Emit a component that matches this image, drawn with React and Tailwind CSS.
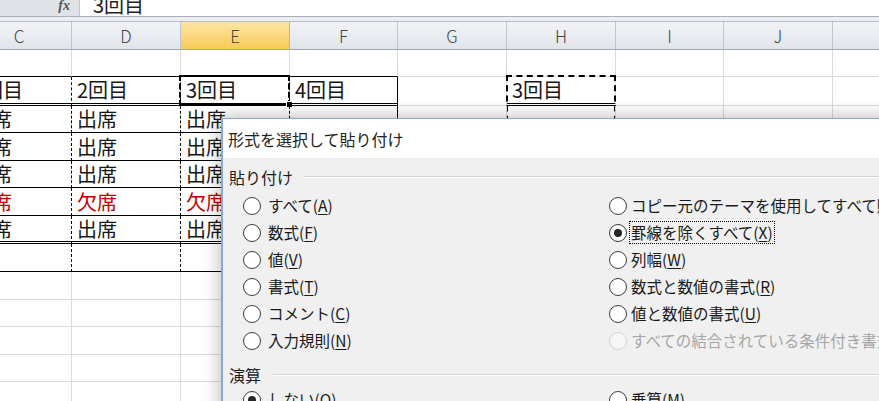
import React from 'react';

const columns = [
  { id: 'C', w: 'w-[105px]' },
  { id: 'D', w: 'w-[109px]' },
  { id: 'E', w: 'w-[109px]' },
  { id: 'F', w: 'w-[108px]' },
  { id: 'G', w: 'w-[109px]' },
  { id: 'H', w: 'w-[109px]' },
  { id: 'I', w: 'w-[108px]' },
  { id: 'J', w: 'w-[109px]' },
  { id: 'K', w: 'w-[100px]' },
];

const rowHeights = [
  'h-[27px]', 'h-[29px]', 'h-[27px]', 'h-[28px]', 'h-[27px]', 'h-[28px]', 'h-[28px]',
  'h-[28px]', 'h-[28px]', 'h-[27px]', 'h-[28px]', 'h-[27px]', 'h-[28px]',
];

// attendance table, sheet rows 2..8
const table = {
  C: ['1回目', '出席', '出席', '出席', '欠席', '出席', ''],
  D: ['2回目', '出席', '出席', '出席', '欠席', '出席', ''],
  E: ['3回目', '出席', '出席', '出席', '欠席', '出席', ''],
  F: ['4回目', '', '', '', '', '', ''],
};

const tableCols = ['C', 'D', 'E', 'F'];

const cellBorders = (r, c) => {
  const inTable = r >= 1 && r <= 7 && tableCols.includes(c);
  let right = 'border-r border-r-[#dadada]';
  if (inTable && c !== 'F') right = 'border-r border-r-black [border-right-style:dashed]!';
  if (inTable && c === 'F') right = 'border-r border-r-black';

  let bottom = 'border-b border-b-[#dadada]';
  if (r === 0 && tableCols.includes(c)) bottom = 'border-b border-b-black';
  if (inTable) {
    bottom = r === 1 || r === 6
      ? 'border-b-[3px] border-b-black [border-bottom-style:double]!'
      : 'border-b border-b-black';
  }
  if (r === 1 && c === 'H') bottom = 'border-b-[3px] border-b-black [border-bottom-style:double]!';
  return `${right} ${bottom}`;
};

const cellText = (r, c) => {
  if (r >= 1 && r <= 7 && table[c]) return table[c][r - 1];
  if (r === 1 && c === 'H') return '3回目';
  return '';
};

const Radio = ({ checked, disabled }) => (
  <span
    className={`w-[18px] h-[18px] rounded-full border flex items-center justify-center shrink-0 ${
      disabled ? 'border-[#d2d2d2] bg-[#f6f6f6]' : 'border-[#3c3c3c] bg-white'
    }`}
  >
    {checked && <span className="w-[8px] h-[8px] rounded-full bg-[#262626]" />}
  </span>
);

const Label = ({ text, k }) => (
  <>
    {text}(<span className="underline underline-offset-2">{k}</span>)
  </>
);

const leftOptions = [
  { text: 'すべて', k: 'A' },
  { text: '数式', k: 'F' },
  { text: '値', k: 'V' },
  { text: '書式', k: 'T' },
  { text: 'コメント', k: 'C' },
  { text: '入力規則', k: 'N' },
];

const rightOptions = [
  { text: 'コピー元のテーマを使用してすべて貼り付け', k: 'H' },
  { text: '罫線を除くすべて', k: 'X', checked: true },
  { text: '列幅', k: 'W' },
  { text: '数式と数値の書式', k: 'R' },
  { text: '値と数値の書式', k: 'U' },
  { text: 'すべての結合されている条件付き書式', k: 'G', disabled: true },
];

const GroupLabel = ({ children, line }) => (
  <div className="flex items-center h-[20px] pl-[6px]">
    <span className="text-[16px] leading-none text-[#1e1e1e]">{children}</span>
    <div className={`flex-1 border-t border-t-[#d6d6d6] border-b border-b-white ${line}`} />
  </div>
);

const PasteSpecialDialog = () => (
  <div className="absolute left-[221px] top-[118px] w-[720px] h-[320px] z-10 border-l-2 border-t border-[#86aad3] shadow-[0_0_18px_rgba(0,0,0,0.3)] flex flex-col">
    <div className="h-[40px] bg-white flex items-center pl-[5px] pr-[47px] border-b border-b-[#ececec]">
      <span className="text-[16px] text-[#222]">形式を選択して貼り付け</span>
      <span className="ml-auto text-[17px] font-bold text-[#333] font-['Liberation_Sans',sans-serif]">?</span>
    </div>
    <div className="flex-1 bg-[#f0f0f0] pt-[8px]">
      <GroupLabel line="ml-[11px]">貼り付け</GroupLabel>
      <div className="grid grid-cols-[366px_1fr] pl-[20px] mt-[5px] text-[15.5px] text-[#1a1a1a]">
        <div className="flex flex-col">
          {leftOptions.map((o) => (
            <div key={o.k} className="h-[27px] flex items-center gap-[7px] whitespace-nowrap">
              <Radio />
              <span className="leading-none"><Label text={o.text} k={o.k} /></span>
            </div>
          ))}
        </div>
        <div className="flex flex-col">
          {rightOptions.map((o) => (
            <div key={o.k} className="h-[27px] flex items-center gap-[2px] whitespace-nowrap">
              <Radio checked={o.checked} disabled={o.disabled} />
              <span
                className={`leading-none px-[1px] py-[3px] border border-dotted ${
                  o.checked ? 'border-black' : 'border-transparent'
                } ${o.disabled ? 'text-[#a6a6a6]' : ''}`}
              >
                <Label text={o.text} k={o.k} />
              </span>
            </div>
          ))}
        </div>
      </div>
      <div className="mt-[11px]">
        <GroupLabel line="ml-[12px]">演算</GroupLabel>
      </div>
      <div className="grid grid-cols-[366px_1fr] pl-[20px] mt-[1px] text-[15.5px] text-[#1a1a1a]">
        <div className="h-[27px] flex items-center gap-[7px] whitespace-nowrap">
          <Radio checked />
          <span className="leading-none"><Label text="しない" k="O" /></span>
        </div>
        <div className="h-[27px] flex items-center gap-[2px] whitespace-nowrap">
          <Radio />
          <span className="leading-none px-[1px] border border-transparent"><Label text="乗算" k="M" /></span>
        </div>
      </div>
    </div>
  </div>
);

export default function App() {
  return (
    <div className="relative w-[879px] h-[401px] overflow-hidden bg-white font-['Noto_Sans_CJK_JP',sans-serif]">
      {/* formula bar */}
      <div className="flex h-[17px] border-b border-b-[#a9b0ba]">
        <div className="w-[80px] bg-[#dfe3e8] border-r border-r-[#c3c9d1] flex justify-end items-start pr-[9px]">
          <span className="text-[14px] leading-[12px] italic font-bold text-[#555] font-['Liberation_Serif',serif]">fx</span>
        </div>
        <div className="flex-1 overflow-hidden pl-[13px]">
          <div className="text-[20px] leading-[20px] -mt-[5px] text-[#222]">3回目</div>
        </div>
      </div>
      <div className="h-[4px] bg-[#eceef1]" />

      <div className="-ml-[33px] w-[946px]">
        {/* column headers */}
        <div className="flex h-[29px] border-t border-t-[#b4bcc6] border-b border-b-[#9fa8b3]">
          {columns.map((c) => (
            <div
              key={c.id}
              className={`${c.w} shrink-0 flex items-center justify-center border-r text-[17px] font-light text-[#444] ${
                c.id === 'E'
                  ? 'bg-gradient-to-b from-[#fde6a2] to-[#f8ca55] border-r-[#d9b060]'
                  : 'bg-gradient-to-b from-[#f1f3f6] to-[#e1e5ea] border-r-[#c0c6ce]'
              }`}
            >
              {c.id === 'K' ? '' : c.id}
            </div>
          ))}
        </div>

        {/* cells */}
        {rowHeights.map((h, r) => (
          <div key={r} className={`flex ${h}`}>
            {columns.map((c) => {
              const text = cellText(r, c.id);
              return (
                <div
                  key={c.id}
                  className={`${c.w} shrink-0 relative flex items-center pl-[5px] text-[20px] leading-none whitespace-nowrap ${cellBorders(r, c.id)} ${
                    text === '欠席' ? 'text-[#c00000]' : 'text-[#161616]'
                  }`}
                >
                  {text}
                  {r === 1 && c.id === 'E' && (
                    <>
                      <div className="absolute -top-[2px] -left-[2px] -right-[1px] -bottom-[3px] border-2 border-black [border-left-style:dashed]! [border-right-style:dashed]!" />
                      <div className="absolute -right-[4px] -bottom-[5px] w-[7px] h-[7px] bg-black border border-white" />
                    </>
                  )}
                  {r === 1 && c.id === 'H' && (
                    <div className="absolute -top-[2px] -left-[1px] -right-[1px] h-[220px] border-2 border-dashed border-black" />
                  )}
                </div>
              );
            })}
          </div>
        ))}
      </div>

      <PasteSpecialDialog />
    </div>
  );
}
